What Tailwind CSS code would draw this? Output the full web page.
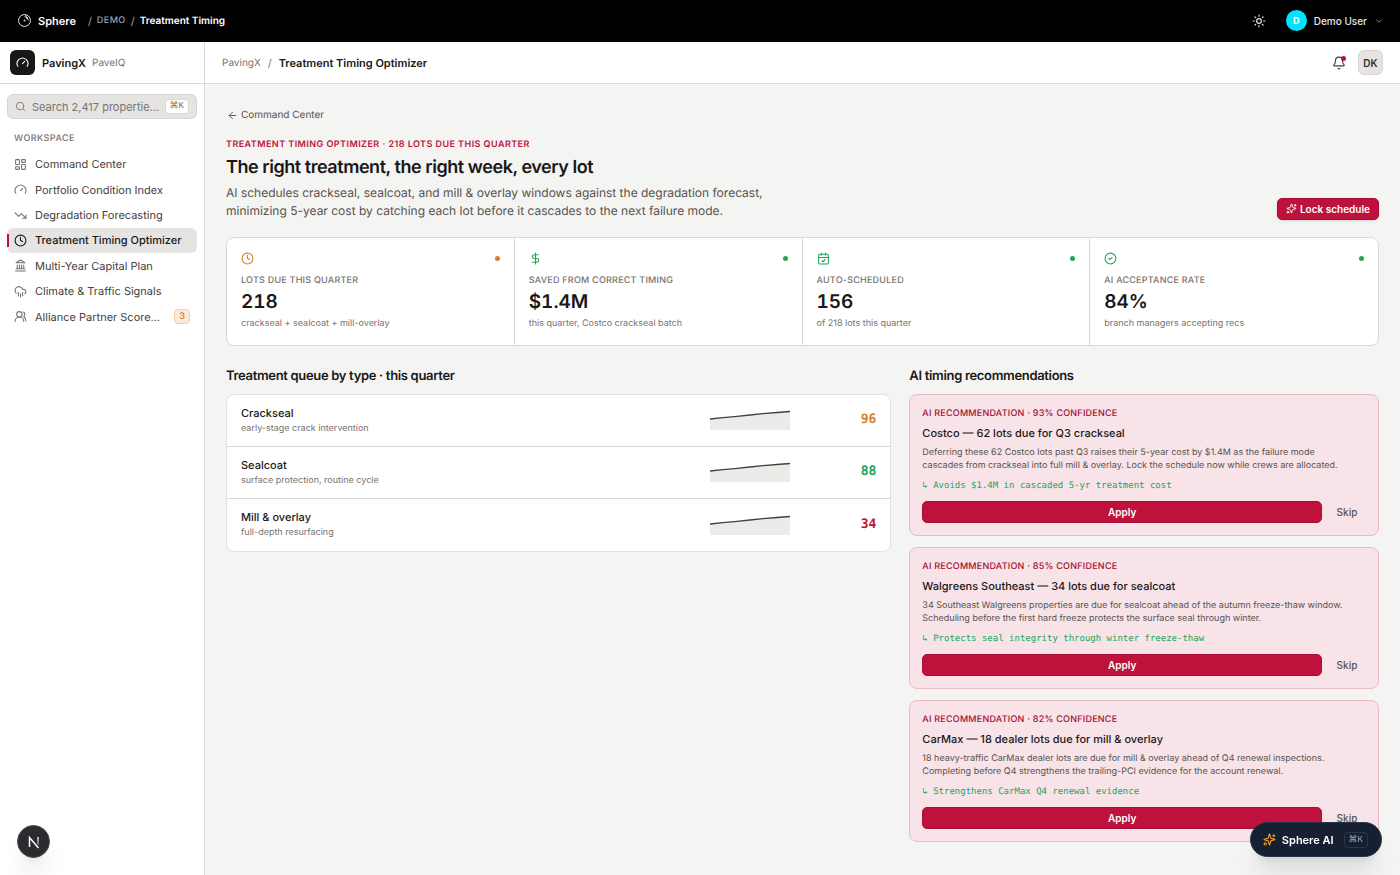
<!DOCTYPE html>
<html lang="en">
<head>
    <meta charset="UTF-8">
    <meta name="viewport" content="width=device-width, initial-scale=1.0">
    <title>Treatment Timing Optimizer - PavingX</title>
    <script src="https://cdn.jsdelivr.net/npm/@tailwindcss/browser@4"></script>
</head>
<body class="min-h-screen flex flex-col bg-[#f4f4f3] font-['Inter',sans-serif] [text-rendering:geometricPrecision] text-[12px] leading-4 text-[#1a1817]">

    <!-- icons -->
    <svg class="hidden">
        <defs>
            <symbol id="i-gauge" viewBox="0 0 24 24"><path d="m12 14 4-4"/><path d="M3.34 19a10 10 0 1 1 17.32 0"/></symbol>
            <symbol id="i-search" viewBox="0 0 24 24"><circle cx="11" cy="11" r="8"/><path d="m21 21-4.3-4.3"/></symbol>
            <symbol id="i-dashboard" viewBox="0 0 24 24"><rect width="7" height="9" x="3" y="3" rx="1"/><rect width="7" height="5" x="14" y="3" rx="1"/><rect width="7" height="9" x="14" y="12" rx="1"/><rect width="7" height="5" x="3" y="16" rx="1"/></symbol>
            <symbol id="i-trend" viewBox="0 0 24 24"><path d="m22 17-8.5-8.5-5 5L2 7"/><path d="M16 17h6v-6"/></symbol>
            <symbol id="i-clock" viewBox="0 0 24 24"><circle cx="12" cy="12" r="10"/><path d="M12 6v6l4 2"/></symbol>
            <symbol id="i-landmark" viewBox="0 0 24 24"><path d="M3 22h18M6 18v-7M10 18v-7M14 18v-7M18 18v-7M4 18h16"/><path d="m12 2 8 5H4z"/></symbol>
            <symbol id="i-rain" viewBox="0 0 24 24"><path d="M4 14.899A7 7 0 1 1 15.71 8h1.79a4.5 4.5 0 0 1 2.5 8.242"/><path d="M16 14v6M8 14v6M12 16v6"/></symbol>
            <symbol id="i-users" viewBox="0 0 24 24"><path d="M18 21a8 8 0 0 0-16 0"/><circle cx="10" cy="8" r="5"/><path d="M22 20c0-3.37-2-6.5-4-8a5 5 0 0 0-.45-8.3"/></symbol>
            <symbol id="i-sun" viewBox="0 0 24 24"><circle cx="12" cy="12" r="4"/><path d="M12 2v2M12 20v2M4.93 4.93l1.41 1.41M17.66 17.66l1.41 1.41M2 12h2M20 12h2M6.34 17.66l-1.41 1.41M19.07 4.93l-1.41 1.41"/></symbol>
            <symbol id="i-chevron" viewBox="0 0 24 24"><path d="m6 9 6 6 6-6"/></symbol>
            <symbol id="i-bell" viewBox="0 0 24 24"><path d="M10.268 21a2 2 0 0 0 3.464 0"/><path d="M3.262 15.326A1 1 0 0 0 4 17h16a1 1 0 0 0 .74-1.673C19.41 13.956 18 12.499 18 8A6 6 0 0 0 6 8c0 4.499-1.411 5.956-2.738 7.326"/></symbol>
            <symbol id="i-arrow-left" viewBox="0 0 24 24"><path d="m12 19-7-7 7-7M19 12H5"/></symbol>
            <symbol id="i-dollar" viewBox="0 0 24 24"><path d="M12 2v20M17 5H9.5a3.5 3.5 0 0 0 0 7h5a3.5 3.5 0 0 1 0 7H6"/></symbol>
            <symbol id="i-calendar" viewBox="0 0 24 24"><path d="M8 2v4M16 2v4M3 10h18"/><rect width="18" height="18" x="3" y="4" rx="2"/><path d="m9 16 2 2 4-4"/></symbol>
            <symbol id="i-check" viewBox="0 0 24 24"><circle cx="12" cy="12" r="10"/><path d="m9 12 2 2 4-4"/></symbol>
            <symbol id="i-sparkles" viewBox="0 0 24 24"><path d="M9.937 15.5A2 2 0 0 0 8.5 14.063l-6.135-1.582a.5.5 0 0 1 0-.962L8.5 9.936A2 2 0 0 0 9.937 8.5l1.582-6.135a.5.5 0 0 1 .963 0L14.063 8.5A2 2 0 0 0 15.5 9.937l6.135 1.581a.5.5 0 0 1 0 .964L15.5 14.063a2 2 0 0 0-1.437 1.437l-1.582 6.135a.5.5 0 0 1-.963 0z"/><path d="M20 3v4M22 5h-4"/><circle cx="4" cy="20" r="2"/></symbol>
            <symbol id="i-spark" viewBox="0 0 80 20"><path d="M0 9 13 7.700 27 6.300 40 5 53 3.700 67 2.500 80 1.500V20H0Z" fill="#ebebea" stroke="none"/><path d="M0 9 13 7.700 27 6.300 40 5 53 3.700 67 2.500 80 1.500"/></symbol>
        </defs>
    </svg>

    <!-- top bar -->
    <header class="h-[42px] shrink-0 bg-black border-b border-black text-white flex items-center justify-between pl-[18px] pr-4">
        <div class="flex items-center">
            <svg class="size-[13px]" viewBox="0 0 24 24" fill="none" stroke="#e5e7eb" stroke-width="1.8"><circle cx="12" cy="12" r="11"/><path d="M12 5a7 7 0 0 1 7 7M12 1c4 2 5 5 4 8"/><circle cx="12" cy="12" r="1" fill="#e5e7eb"/></svg>
            <a href="#" class="ml-[7px] text-[11px] font-semibold">Sphere</a>
            <nav class="flex items-center gap-[5px] ml-3 text-[11px]" aria-label="Sphere">
                <span class="text-gray-400">/</span>
                <a href="#" class="text-[9px] font-medium tracking-wider text-gray-400">DEMO</a>
                <span class="text-gray-400">/</span>
                <span class="text-[10px] font-semibold">Treatment Timing</span>
            </nav>
        </div>
        <div class="flex items-center">
            <button aria-label="Theme"><svg class="size-[14px]" fill="none" stroke="#e5e7eb" stroke-width="2" stroke-linecap="round" stroke-linejoin="round"><use href="#i-sun"/></svg></button>
            <button class="flex items-center ml-5">
                <span class="size-[21px] rounded-full bg-[#00e5ff] text-[9px] font-bold flex items-center justify-center">D</span>
                <span class="ml-[7px] text-[10px] font-medium text-gray-200">Demo User</span>
                <svg class="ml-[7px] size-[10px]" fill="none" stroke="#9ca3af" stroke-width="2" stroke-linecap="round" stroke-linejoin="round"><use href="#i-chevron"/></svg>
            </button>
        </div>
    </header>

    <div class="flex flex-1">
        <!-- sidebar -->
        <aside class="w-[205px] shrink-0 bg-white border-r border-[#d9d8d6]">
            <div class="h-[42px] border-b border-[#d9d8d6] flex items-center px-[10px]">
                <span class="size-[25px] rounded-md bg-[#1a1817] flex items-center justify-center">
                    <svg class="size-[13px]" fill="none" stroke="#ffffff" stroke-width="2" stroke-linecap="round" stroke-linejoin="round"><use href="#i-gauge"/></svg>
                </span>
                <span class="ml-[7px] text-[11px] font-semibold">PavingX</span>
                <span class="ml-[6px] text-[10px] text-[#78736f]">PaveIQ</span>
            </div>
            <div class="px-[7px] pt-[10px]">
                <label class="h-[25px] rounded-md border border-[#d6d5d3] bg-[#e5e4e2] flex items-center pl-[7px] pr-[7px] text-[#78736f]">
                    <svg class="size-[11px] shrink-0" fill="none" stroke="currentColor" stroke-width="2" stroke-linecap="round" stroke-linejoin="round"><use href="#i-search"/></svg>
                    <input type="text" aria-label="Search properties" placeholder="Search 2,417 propertie…" class="ml-[6px] min-w-0 flex-1 bg-transparent text-[11px] outline-none placeholder:text-[#78736f]">
                    <kbd class="h-[15px] px-1 rounded border border-[#d9d8d6] bg-white font-['Liberation_Mono','Inter',monospace] text-[9px] leading-[13px]">⌘K</kbd>
                </label>
                <div class="mt-3 px-[7px] text-[9px] font-medium tracking-wider text-[#78736f]">WORKSPACE</div>
                <nav class="mt-[5px] h-[177px] grid auto-rows-fr gap-px text-[11px] text-[#45403c] [&_svg]:size-[13px] [&_svg]:text-[#78736f]">
                    <a href="#" class="flex items-center gap-2 px-[7px] rounded-md">
                        <svg fill="none" stroke="currentColor" stroke-width="2" stroke-linecap="round" stroke-linejoin="round"><use href="#i-dashboard"/></svg>Command Center
                    </a>
                    <a href="#" class="flex items-center gap-2 px-[7px] rounded-md">
                        <svg fill="none" stroke="currentColor" stroke-width="2" stroke-linecap="round" stroke-linejoin="round"><use href="#i-gauge"/></svg>Portfolio Condition Index
                    </a>
                    <a href="#" class="flex items-center gap-2 px-[7px] rounded-md">
                        <svg fill="none" stroke="currentColor" stroke-width="2" stroke-linecap="round" stroke-linejoin="round"><use href="#i-trend"/></svg>Degradation Forecasting
                    </a>
                    <a href="#" aria-current="page" class="relative flex items-center gap-2 px-[7px] rounded-md bg-[#e5e4e2] font-medium text-[#1a1817] [&_svg]:text-[#1a1817]!">
                        <span class="absolute left-0 inset-y-[6px] w-[2px] bg-[#be123c]"></span>
                        <svg fill="none" stroke="currentColor" stroke-width="2" stroke-linecap="round" stroke-linejoin="round"><use href="#i-clock"/></svg>Treatment Timing Optimizer
                    </a>
                    <a href="#" class="flex items-center gap-2 px-[7px] rounded-md">
                        <svg fill="none" stroke="currentColor" stroke-width="2" stroke-linecap="round" stroke-linejoin="round"><use href="#i-landmark"/></svg>Multi-Year Capital Plan
                    </a>
                    <a href="#" class="flex items-center gap-2 px-[7px] rounded-md">
                        <svg fill="none" stroke="currentColor" stroke-width="2" stroke-linecap="round" stroke-linejoin="round"><use href="#i-rain"/></svg>Climate &amp; Traffic Signals
                    </a>
                    <a href="#" class="flex items-center gap-2 px-[7px] rounded-md">
                        <svg fill="none" stroke="currentColor" stroke-width="2" stroke-linecap="round" stroke-linejoin="round"><use href="#i-users"/></svg>
                        <span class="flex-1 whitespace-nowrap">Alliance Partner Score…</span>
                        <span class="w-4 h-[15px] rounded border border-[#f2cfae] bg-[#fbeadb] text-[9px] leading-[13px] font-semibold text-center text-[#d9822b]">3</span>
                    </a>
                </nav>
            </div>
        </aside>

        <div class="flex-1 min-w-0">
            <!-- page header -->
            <div class="h-[42px] bg-white border-b border-[#d9d8d6] flex items-center justify-between px-[17px]">
                <nav class="flex items-center gap-[7px] text-[11px]" aria-label="Breadcrumb">
                    <a href="#" class="text-[10px] text-[#78736f]">PavingX</a>
                    <span class="text-[#78736f]">/</span>
                    <span class="font-semibold">Treatment Timing Optimizer</span>
                </nav>
                <div class="flex items-center gap-3">
                    <button class="relative" aria-label="Notifications">
                        <svg class="size-[14px]" fill="none" stroke="#45403c" stroke-width="2" stroke-linecap="round" stroke-linejoin="round"><use href="#i-bell"/></svg>
                        <span class="absolute top-0 right-0 size-[5px] rounded-full bg-[#be123c]"></span>
                    </button>
                    <button class="size-[25px] rounded-md border border-[#d6d5d3] bg-[#e5e4e2] text-[10px] font-semibold text-[#33302d]">DK</button>
                </div>
            </div>

            <main class="px-[21px] pt-[23px] pb-8">
                <a href="#" class="inline-flex items-center gap-[3px] ml-px text-[10px] leading-4 text-[#57524e]">
                    <svg class="size-[11px]" fill="none" stroke="currentColor" stroke-width="2" stroke-linecap="round" stroke-linejoin="round"><use href="#i-arrow-left"/></svg>Command Center
                </a>
                <div class="mt-3 flex items-end justify-between">
                    <div>
                        <div class="text-[9px] font-semibold tracking-wider text-[#be123c]">TREATMENT TIMING OPTIMIZER · 218 LOTS DUE THIS QUARTER</div>
                        <h1 class="mt-[3px] text-[18px] leading-6 font-semibold tracking-tight">The right treatment, the right week, every lot</h1>
                        <p class="mt-1 max-w-[560px] text-[12px] leading-[18px] text-[#57524e]">AI schedules crackseal, sealcoat, and mill &amp; overlay windows against the degradation forecast,<br>minimizing 5-year cost by catching each lot before it cascades to the next failure mode.</p>
                    </div>
                    <button class="h-[22px] px-2 rounded-[5px] border border-[#a50f35] bg-[#be123c] text-white text-[10px] font-semibold flex items-center gap-[3px] shadow-sm">
                        <svg class="size-[11px]" fill="none" stroke="currentColor" stroke-width="2" stroke-linecap="round" stroke-linejoin="round"><use href="#i-sparkles"/></svg>Lock schedule
                    </button>
                </div>

                <!-- stats -->
                <section class="mt-[17px] grid grid-cols-4 divide-x divide-[#d9d8d6] rounded-lg border border-[#d9d8d6] bg-white">
                    <div class="p-[14px]">
                        <div class="flex items-center justify-between text-[#d9822b]">
                            <svg class="size-[13px]" fill="none" stroke="currentColor" stroke-width="2" stroke-linecap="round" stroke-linejoin="round"><use href="#i-clock"/></svg>
                            <span class="size-[5px] rounded-full bg-current"></span>
                        </div>
                        <div class="mt-[10px] text-[9px] leading-3 font-medium tracking-wide text-[#78736f]">LOTS DUE THIS QUARTER</div>
                        <div class="mt-[3px] text-[19px] leading-6 font-semibold tabular-nums">218</div>
                        <div class="mt-[3px] text-[9px] leading-[14px] text-[#78736f]">crackseal + sealcoat + mill-overlay</div>
                    </div>
                    <div class="p-[14px]">
                        <div class="flex items-center justify-between text-[#22a559]">
                            <svg class="size-[13px]" fill="none" stroke="currentColor" stroke-width="2" stroke-linecap="round" stroke-linejoin="round"><use href="#i-dollar"/></svg>
                            <span class="size-[5px] rounded-full bg-current"></span>
                        </div>
                        <div class="mt-[10px] text-[9px] leading-3 font-medium tracking-wide text-[#78736f]">SAVED FROM CORRECT TIMING</div>
                        <div class="mt-[3px] text-[19px] leading-6 font-semibold tabular-nums">$1.4M</div>
                        <div class="mt-[3px] text-[9px] leading-[14px] text-[#78736f]">this quarter, Costco crackseal batch</div>
                    </div>
                    <div class="p-[14px]">
                        <div class="flex items-center justify-between text-[#22a559]">
                            <svg class="size-[13px]" fill="none" stroke="currentColor" stroke-width="2" stroke-linecap="round" stroke-linejoin="round"><use href="#i-calendar"/></svg>
                            <span class="size-[5px] rounded-full bg-current"></span>
                        </div>
                        <div class="mt-[10px] text-[9px] leading-3 font-medium tracking-wide text-[#78736f]">AUTO-SCHEDULED</div>
                        <div class="mt-[3px] text-[19px] leading-6 font-semibold tabular-nums">156</div>
                        <div class="mt-[3px] text-[9px] leading-[14px] text-[#78736f]">of 218 lots this quarter</div>
                    </div>
                    <div class="p-[14px]">
                        <div class="flex items-center justify-between text-[#22a559]">
                            <svg class="size-[13px]" fill="none" stroke="currentColor" stroke-width="2" stroke-linecap="round" stroke-linejoin="round"><use href="#i-check"/></svg>
                            <span class="size-[5px] rounded-full bg-current"></span>
                        </div>
                        <div class="mt-[10px] text-[9px] leading-3 font-medium tracking-wide text-[#78736f]">AI ACCEPTANCE RATE</div>
                        <div class="mt-[3px] text-[19px] leading-6 font-semibold tabular-nums">84%</div>
                        <div class="mt-[3px] text-[9px] leading-[14px] text-[#78736f]">branch managers accepting recs</div>
                    </div>
                </section>

                <div class="mt-5 grid grid-cols-[17fr_12fr] items-start gap-x-[18px]">
                    <!-- queue -->
                    <section>
                        <h2 class="text-[13px] leading-5 font-semibold tracking-tight">Treatment queue by type · this quarter</h2>
                        <ul class="mt-2 rounded-lg border border-[#e3e2e0] bg-white divide-y divide-[#d9d8d6]">
                            <li class="h-[52px] px-[14px] flex items-center">
                                <div class="flex-1">
                                    <div class="text-[11px] leading-4 font-medium">Crackseal</div>
                                    <div class="text-[9px] leading-[15px] text-[#78736f]">early-stage crack intervention</div>
                                </div>
                                <svg class="w-20 h-5" fill="none" stroke="#45403c" stroke-width="1.3"><use href="#i-spark"/></svg>
                                <div class="w-[86px] text-right font-['DejaVu_Sans_Mono',monospace] text-[13px] font-bold text-[#d9822b]">96</div>
                            </li>
                            <li class="h-[52px] px-[14px] flex items-center">
                                <div class="flex-1">
                                    <div class="text-[11px] leading-4 font-medium">Sealcoat</div>
                                    <div class="text-[9px] leading-[15px] text-[#78736f]">surface protection, routine cycle</div>
                                </div>
                                <svg class="w-20 h-5" fill="none" stroke="#45403c" stroke-width="1.3"><use href="#i-spark"/></svg>
                                <div class="w-[86px] text-right font-['DejaVu_Sans_Mono',monospace] text-[13px] font-bold text-[#22a559]">88</div>
                            </li>
                            <li class="h-[52px] px-[14px] flex items-center">
                                <div class="flex-1">
                                    <div class="text-[11px] leading-4 font-medium">Mill &amp; overlay</div>
                                    <div class="text-[9px] leading-[15px] text-[#78736f]">full-depth resurfacing</div>
                                </div>
                                <svg class="w-20 h-5" fill="none" stroke="#45403c" stroke-width="1.3"><use href="#i-spark"/></svg>
                                <div class="w-[86px] text-right font-['DejaVu_Sans_Mono',monospace] text-[13px] font-bold text-[#be123c]">34</div>
                            </li>
                        </ul>
                    </section>

                    <!-- recommendations -->
                    <section>
                        <h2 class="text-[13px] leading-5 font-semibold tracking-tight">AI timing recommendations</h2>
                        <div class="mt-2 flex flex-col gap-[11px]">
                            <article class="rounded-lg border border-[#ecb9c6] bg-[#f7e3e8] p-3">
                                <div class="text-[9px] leading-[14px] font-medium tracking-wide text-[#a50f35]">AI RECOMMENDATION · 93% CONFIDENCE</div>
                                <h3 class="mt-1 text-[11px] leading-4 font-medium">Costco — 62 lots due for Q3 crackseal</h3>
                                <p class="mt-[5px] text-[9px] leading-[13px] text-[#57524e]">Deferring these 62 Costco lots past Q3 raises their 5-year cost by $1.4M as the failure mode<br>cascades from crackseal into full mill &amp; overlay. Lock the schedule now while crews are allocated.</p>
                                <div class="mt-[7px] font-['DejaVu_Sans_Mono',monospace] text-[9px] leading-[14px] text-[#22a559]">↳ Avoids $1.4M in cascaded 5-yr treatment cost</div>
                                <div class="mt-2 flex gap-[6px]">
                                    <button class="flex-1 h-[22px] rounded-[5px] border border-[#a50f35] bg-[#be123c] text-white text-[10px] font-semibold">Apply</button>
                                    <button class="w-[38px] text-[10px] font-medium text-[#57524e]">Skip</button>
                                </div>
                            </article>
                            <article class="rounded-lg border border-[#ecb9c6] bg-[#f7e3e8] p-3">
                                <div class="text-[9px] leading-[14px] font-medium tracking-wide text-[#a50f35]">AI RECOMMENDATION · 85% CONFIDENCE</div>
                                <h3 class="mt-1 text-[11px] leading-4 font-medium">Walgreens Southeast — 34 lots due for sealcoat</h3>
                                <p class="mt-[5px] text-[9px] leading-[13px] text-[#57524e]">34 Southeast Walgreens properties are due for sealcoat ahead of the autumn freeze-thaw window.<br>Scheduling before the first hard freeze protects the surface seal through winter.</p>
                                <div class="mt-[7px] font-['DejaVu_Sans_Mono',monospace] text-[9px] leading-[14px] text-[#22a559]">↳ Protects seal integrity through winter freeze-thaw</div>
                                <div class="mt-2 flex gap-[6px]">
                                    <button class="flex-1 h-[22px] rounded-[5px] border border-[#a50f35] bg-[#be123c] text-white text-[10px] font-semibold">Apply</button>
                                    <button class="w-[38px] text-[10px] font-medium text-[#57524e]">Skip</button>
                                </div>
                            </article>
                            <article class="rounded-lg border border-[#ecb9c6] bg-[#f7e3e8] p-3">
                                <div class="text-[9px] leading-[14px] font-medium tracking-wide text-[#a50f35]">AI RECOMMENDATION · 82% CONFIDENCE</div>
                                <h3 class="mt-1 text-[11px] leading-4 font-medium">CarMax — 18 dealer lots due for mill &amp; overlay</h3>
                                <p class="mt-[5px] text-[9px] leading-[13px] text-[#57524e]">18 heavy-traffic CarMax dealer lots are due for mill &amp; overlay ahead of Q4 renewal inspections.<br>Completing before Q4 strengthens the trailing-PCI evidence for the account renewal.</p>
                                <div class="mt-[7px] font-['DejaVu_Sans_Mono',monospace] text-[9px] leading-[14px] text-[#22a559]">↳ Strengthens CarMax Q4 renewal evidence</div>
                                <div class="mt-2 flex gap-[6px]">
                                    <button class="flex-1 h-[22px] rounded-[5px] border border-[#a50f35] bg-[#be123c] text-white text-[10px] font-semibold">Apply</button>
                                    <button class="w-[38px] text-[10px] font-medium text-[#57524e]">Skip</button>
                                </div>
                            </article>
                        </div>
                    </section>
                </div>
            </main>
        </div>
    </div>

    <!-- floating buttons -->
    <button class="fixed left-[17px] bottom-[17px] size-[33px] rounded-full border border-[#4a4a4e] bg-[#2b2b30] shadow-xl flex items-center justify-center" aria-label="Dev tools">
        <svg class="size-[14px]" viewBox="0 0 14 14" fill="none" stroke-width="1.500">
            <defs><linearGradient id="fade" gradientUnits="userSpaceOnUse" x1="0" y1="1" x2="0" y2="12"><stop stop-color="#fff"/><stop offset="1" stop-color="#fff" stop-opacity="0.200"/></linearGradient></defs>
            <path d="M2.500 12V2.500L11.500 13" stroke="#fff"/><path d="M11 2V10" stroke="url(#fade)"/>
        </svg>
    </button>
    <button class="fixed right-[18px] bottom-[18px] h-[35px] pl-3 pr-[13px] rounded-full border border-[#27344a] bg-[#162032] text-white shadow-xl flex items-center">
        <svg class="size-[13px]" fill="none" stroke="#f59e2b" stroke-width="2" stroke-linecap="round" stroke-linejoin="round"><use href="#i-sparkles"/></svg>
        <span class="ml-[6px] text-[11px] font-semibold">Sphere AI</span>
        <kbd class="ml-[10px] h-4 px-1 rounded border border-[#2b3648] font-['Liberation_Mono','Inter',monospace] text-[9px] leading-[14px] text-gray-400">⌘K</kbd>
    </button>

</body>
</html>
